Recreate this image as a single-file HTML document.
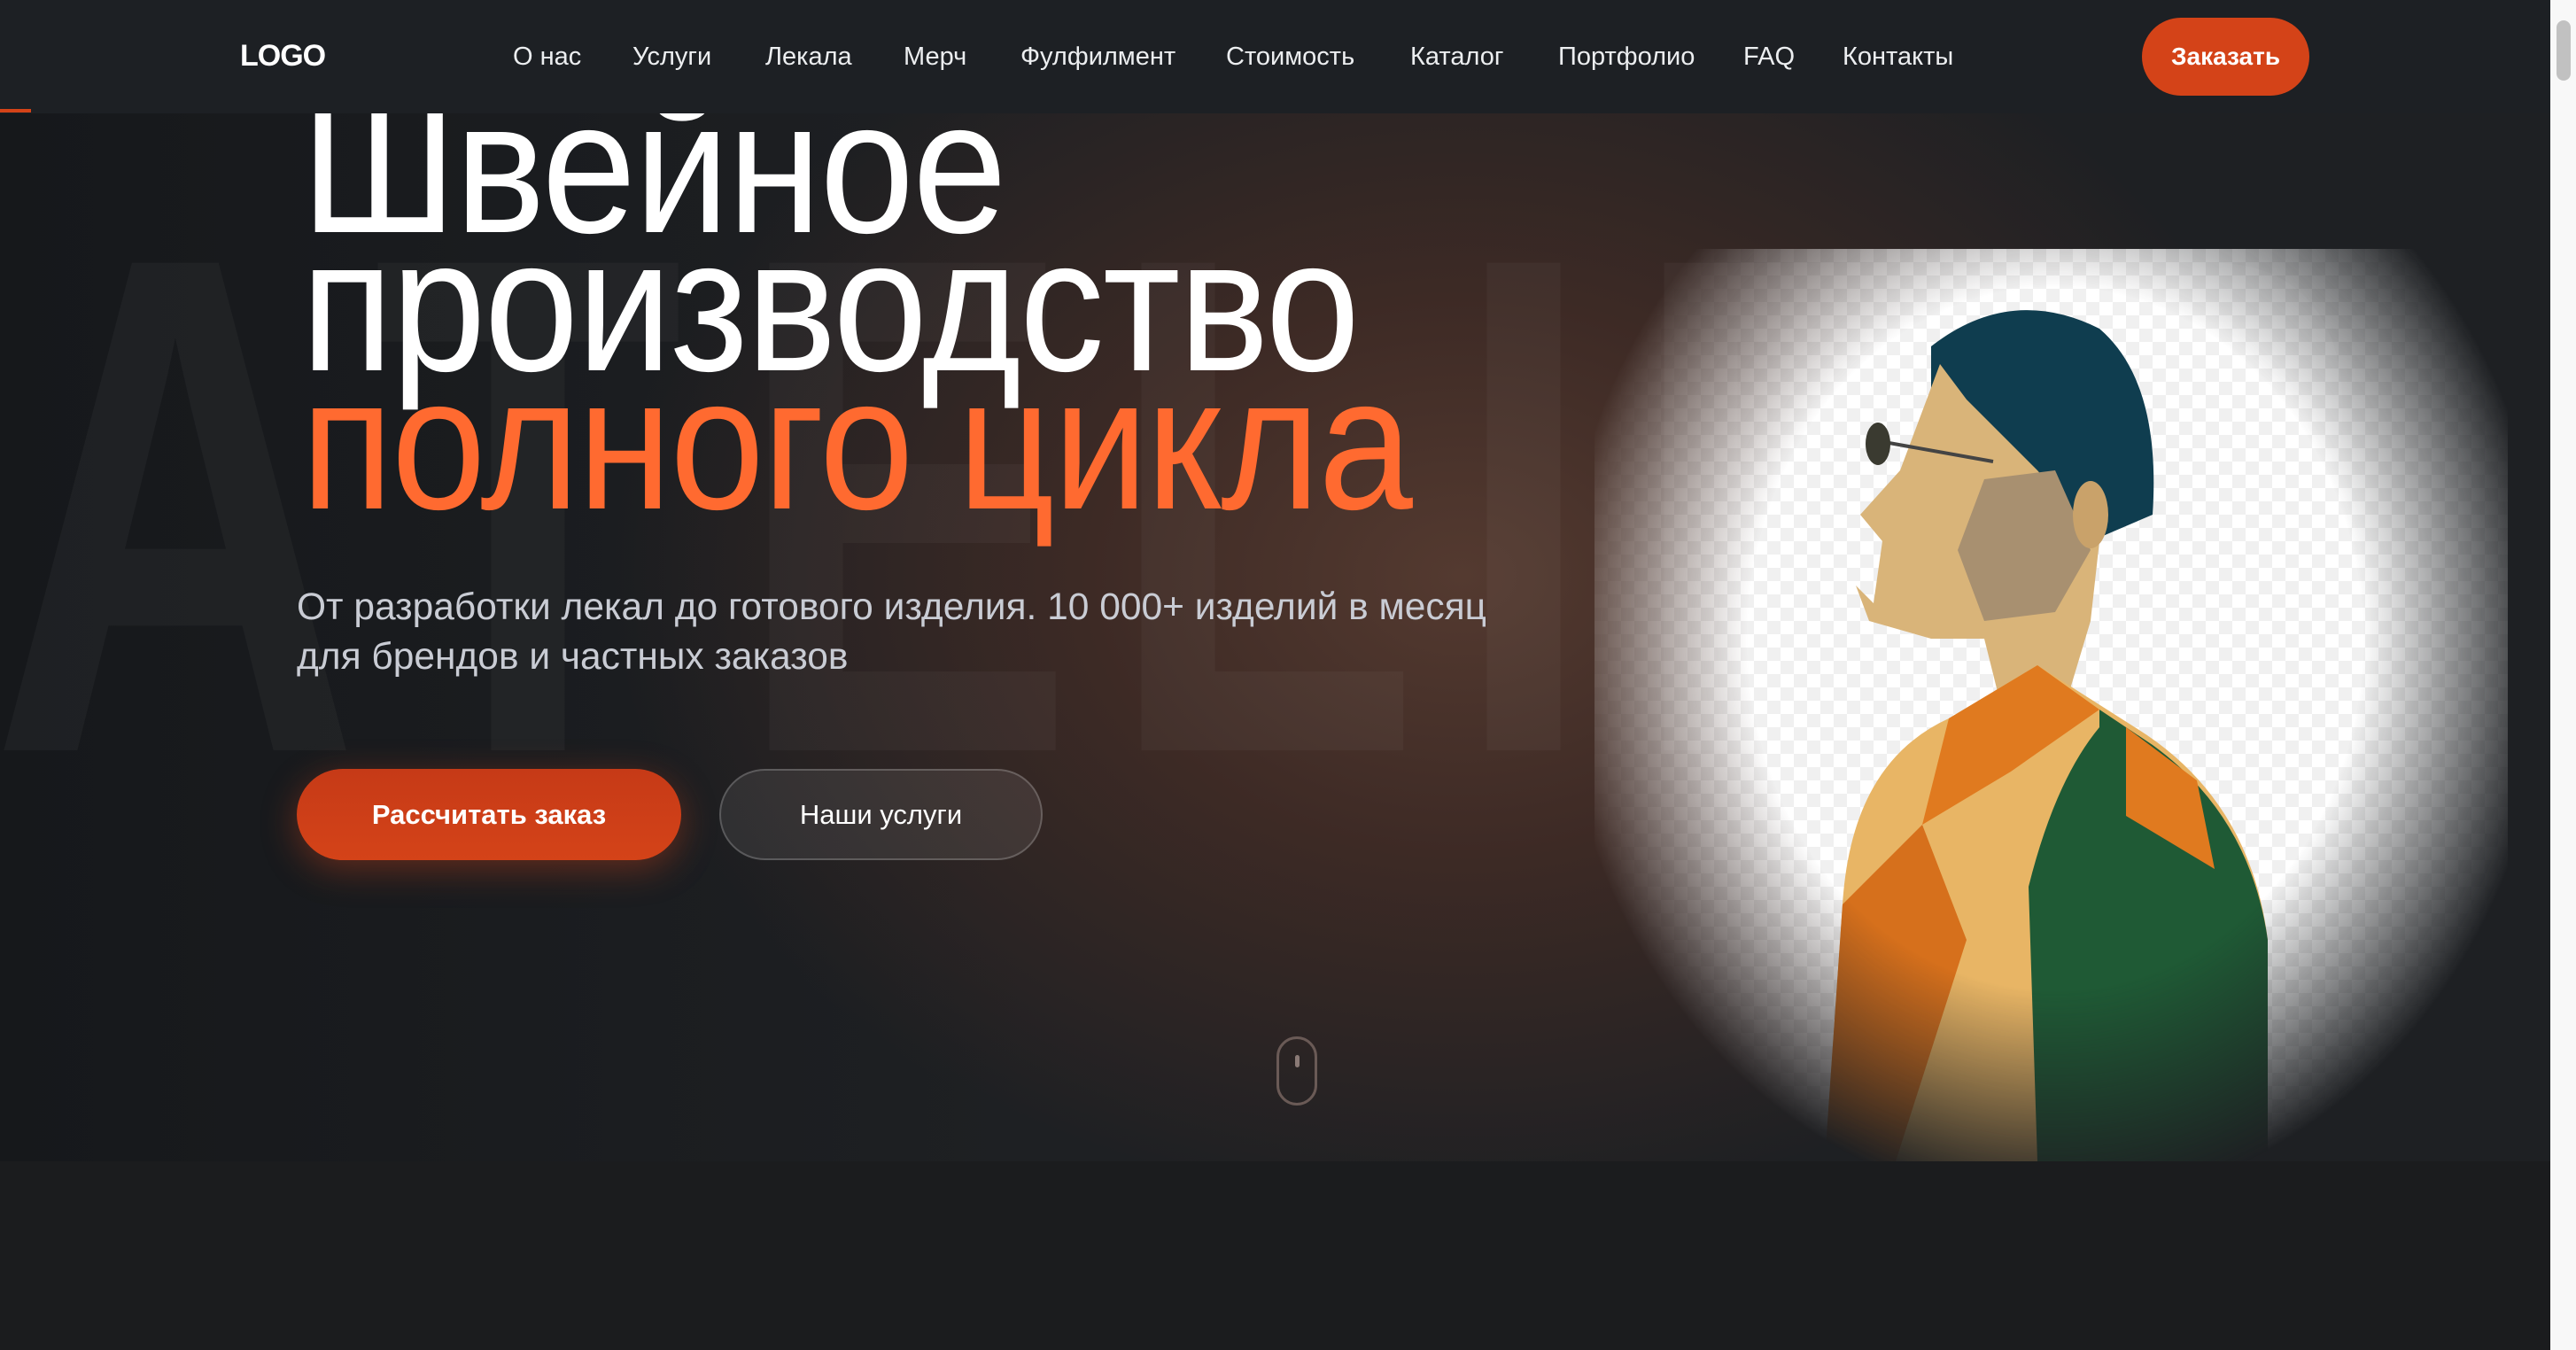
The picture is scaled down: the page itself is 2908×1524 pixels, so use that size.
<!DOCTYPE html>
<html><head><meta charset="utf-8"><style>
*{margin:0;padding:0;box-sizing:border-box}
body{width:2908px;height:1524px;overflow:hidden;background:#1b1c1e;font-family:"Liberation Sans","Noto Sans CJK SC",sans-serif;position:relative}
.hero{position:absolute;left:0;top:0;width:2879px;height:1311px;overflow:hidden;
background:radial-gradient(ellipse 1200px 900px at 1650px 650px,#543a30 0%,#3d2a25 35%,rgba(29,30,33,0) 80%),linear-gradient(90deg,#16181b 0%,#1e2023 40%,#1e2023 100%)}
.bgl{position:absolute;top:170px;font-weight:bold;font-size:800px;line-height:1;color:rgba(255,255,255,0.035);transform:scaleX(0.72);transform-origin:left top}
.hdr{position:absolute;left:0;top:0;width:2879px;height:128px;background:#1d2024}
.logo{position:absolute;left:271px;top:44px;font-size:34px;color:#fff;font-weight:bold;letter-spacing:-1px}
.nav{position:absolute;top:48px;font-size:29px;color:#eceef0}
.btn1{position:absolute;left:2418px;top:20px;width:189px;height:88px;border-radius:44px;background:#d44318;color:#fff;font-size:28px;font-weight:bold;text-align:center;line-height:88px}
.line{position:absolute;left:0;top:123px;width:35px;height:4px;background:#d44318}
h1{position:absolute;left:340px;top:0;font-weight:normal;font-size:214px;line-height:156px;color:#fff;transform:scaleX(0.895);transform-origin:left top;white-space:nowrap;letter-spacing:-2px}
.sub{position:absolute;left:335px;top:658px;font-size:42.5px;line-height:56px;color:#c9ccd4;white-space:nowrap}
.b1{position:absolute;left:335px;top:868px;width:434px;height:103px;border-radius:52px;background:linear-gradient(180deg,#c63a17,#d44318);box-shadow:0 10px 40px rgba(212,67,24,0.4);color:#fff;font-weight:bold;font-size:31px;text-align:center;line-height:103px}
.b2{position:absolute;left:812px;top:868px;width:365px;height:103px;border-radius:52px;background:rgba(255,255,255,0.08);border:2px solid rgba(255,255,255,0.2);color:#fff;font-size:31px;text-align:center;line-height:99px}
.mouse{position:absolute;left:1441px;top:1170px;width:46px;height:78px;border:3px solid #6a5a56;border-radius:23px}
.mouse:after{content:"";position:absolute;left:18px;top:18px;width:5px;height:14px;border-radius:3px;background:#8a7a76}
.img{position:absolute;left:1800px;top:281px;width:1031px;height:1030px;overflow:hidden;
background:repeating-conic-gradient(#f0f0f0 0 25%,#ffffff 0 50%) 0 0/30px 30px;
-webkit-mask-image:radial-gradient(ellipse 560px 640px at 520px 440px,#000 62%,rgba(0,0,0,0.4) 85%,transparent 100%);
mask-image:radial-gradient(ellipse 560px 640px at 520px 440px,#000 62%,rgba(0,0,0,0.4) 85%,transparent 100%)}
.sb{position:absolute;left:2879px;top:0;width:29px;height:1524px;background:#f8f8f8}
.th{position:absolute;left:2886px;top:23px;width:16px;height:68px;border-radius:8px;background:#c1c1c1}
</style></head><body>
<div class="hero">
<div class="bgl" style="left:-10px">A</div>
<div class="bgl" style="left:420px">T</div>
<div class="bgl" style="left:830px">E</div>
<div class="bgl" style="left:1250px">L</div>
<div class="bgl" style="left:1640px">I</div>
<div class="bgl" style="left:1840px">E</div>
<div class="bgl" style="left:2260px">R</div>
<h1><div style="height:156px;margin-top:111px">Швейное</div><div>производство</div><div style="color:#ff6a30">полного цикла</div></h1>
<div class="sub">От разработки лекал до готового изделия. 10 000+ изделий в месяц<br>для брендов и частных заказов</div>
<div class="b1">Рассчитать заказ</div>
<div class="b2">Наши услуги</div>
<div class="mouse"></div>
<div class="img">
<svg width="1031" height="1030" viewBox="0 0 1031 1030" style="position:absolute;left:0;top:0">
<path d="M380 110 Q470 40 570 90 Q640 150 630 300 L560 330 L380 170 Z" fill="#0f3d4f"/>
<path d="M390 130 L345 250 L300 300 L325 330 L315 400 L295 380 L310 420 L380 440 L440 440 L470 560 L530 520 L560 420 L570 330 L500 250 L420 170 Z" fill="#d9b479"/>
<path d="M440 260 L520 250 L560 340 L520 410 L440 420 L410 340 Z" fill="#a89070"/>
<path d="M310 215 L450 240" stroke="#444" stroke-width="4"/>
<ellipse cx="320" cy="220" rx="14" ry="24" fill="#3a3a30"/>
<ellipse cx="560" cy="300" rx="20" ry="38" fill="#c9a26a"/>
<path d="M280 740 Q290 580 400 530 L500 470 L610 540 Q740 620 760 780 L760 1030 L260 1030 Z" fill="#e8b565"/>
<path d="M400 530 L500 470 L570 520 L470 590 L370 650 Z" fill="#e07a1f"/>
<path d="M280 740 L370 650 L420 780 L340 1030 L260 1030 Z" fill="#d6701c"/>
<path d="M570 520 L630 560 Q740 640 760 780 L760 1030 L500 1030 L490 720 Q520 600 570 540 Z" fill="#1f5a35"/>
<path d="M600 540 L680 600 L700 700 L600 640 Z" fill="#e07a1f"/>
</svg>
</div>
</div>
<div class="hdr">
<div class="logo">LOGO</div>
<div class="nav" style="left:579px">О нас</div>
<div class="nav" style="left:714px">Услуги</div>
<div class="nav" style="left:864px">Лекала</div>
<div class="nav" style="left:1020px">Мерч</div>
<div class="nav" style="left:1152px">Фулфилмент</div>
<div class="nav" style="left:1384px">Стоимость</div>
<div class="nav" style="left:1592px">Каталог</div>
<div class="nav" style="left:1759px">Портфолио</div>
<div class="nav" style="left:1968px">FAQ</div>
<div class="nav" style="left:2080px">Контакты</div>
<div class="btn1">Заказать</div>
</div>
<div class="line"></div>
<div class="sb"></div><div class="th"></div>
</body></html>
